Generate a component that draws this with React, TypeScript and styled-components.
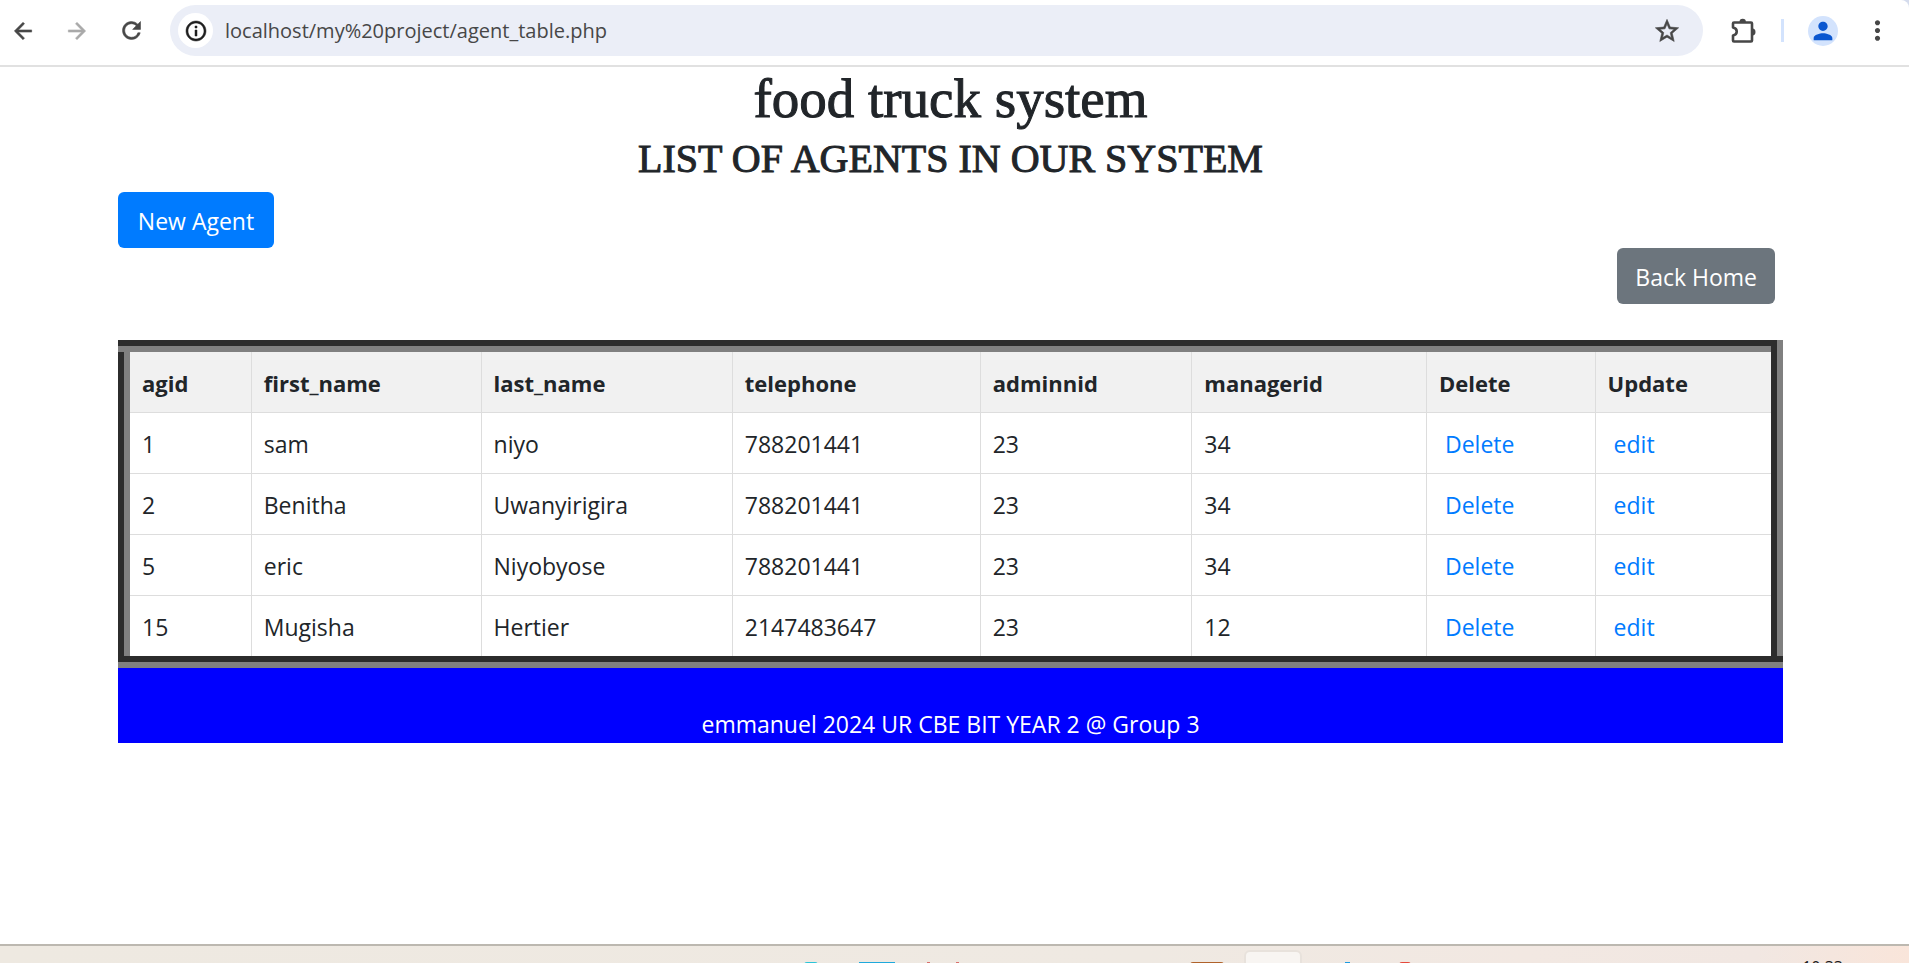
import React from "react";
import styled, { createGlobalStyle } from "styled-components";
import {
  MdArrowBack,
  MdArrowForward,
  MdRefresh,
  MdInfoOutline,
  MdStarBorder,
  MdPerson,
  MdMoreVert,
} from "react-icons/md";

const sans = `"Segoe UI", "Open Sans", "Noto Sans", sans-serif`;

const GlobalStyle = createGlobalStyle`
  *, *::before, *::after { box-sizing: border-box; }
  body {
    margin: 0;
    background: #fff;
    color: #212529;
    font-family: ${sans};
    font-size: 23px;
    line-height: 36px;
  }
`;

const Screen = styled.div`
  display: flex;
  flex-direction: column;
  height: 100vh;
  overflow: hidden;
`;

const ToolbarFrame = styled.div`
  background: #d5dced;
  flex: none;
`;

const Toolbar = styled.header`
  display: flex;
  align-items: center;
  padding: 5px 17px 9px 8px;
  background: #fff;
  border-bottom: 2px solid #e1e1e1;
  border-top-right-radius: 8px;
`;

const IconButton = styled.button<{ $color?: string; $bold?: boolean }>`
  display: flex;
  align-items: center;
  justify-content: center;
  width: 30px;
  height: 36px;
  padding: 0;
  border: 0;
  background: transparent;
  color: ${(p) => p.$color ?? "#474747"};

  svg {
    flex: none;
  }

  path:not([fill="none"]) {
    ${(p) => p.$bold && "stroke: currentColor; stroke-width: 0.5;"}
  }
`;

const NavGroup = styled.nav`
  display: flex;
  gap: 24px;
  margin-right: 24px;
`;

const AddressBar = styled.div`
  display: flex;
  flex: 1;
  align-items: center;
  height: 51px;
  padding: 0 21px 0 8px;
  border-radius: 26px;
  background: #ebeef7;
`;

const InfoButton = styled(IconButton)`
  width: 35px;
  height: 35px;
  border-radius: 50%;
  background: #fff;
`;

const AddressInput = styled.input`
  flex: 1;
  height: 36px;
  margin: 0 12px;
  padding: 0 0 1px;
  border: 0;
  outline: 0;
  background: transparent;
  color: #474747;
  font: 20px/34px ${sans};
`;

const ToolGroup = styled.div`
  display: flex;
  align-items: center;
  margin-left: 25px;
`;

const Divider = styled.span`
  width: 3px;
  height: 23px;
  margin: 0 24px 0 23px;
  background: #d3e3fd;
`;

const Avatar = styled(IconButton)`
  width: 30px;
  height: 30px;
  margin-right: 24px;
  border-radius: 50%;
  background: #d3e3fd;
`;

const Page = styled.main`
  flex: 1;
  min-height: 0;
  padding: 0 126px 0 118px;
`;

const Title = styled.h1`
  margin: 0;
  font: 500 55px/64px "Century", "Liberation Serif", serif;
  text-align: center;
  -webkit-text-stroke: 1px currentColor;
`;

const Subtitle = styled.h2`
  margin: 0 0 5px;
  font: 500 40px/56px "Century", "Liberation Serif", serif;
  text-align: center;
  -webkit-text-stroke: 1px currentColor;
`;

const Actions = styled.div<{ $end?: boolean }>`
  display: flex;
  justify-content: ${(p) => (p.$end ? "flex-end" : "flex-start")};
  padding-right: 8px;
`;

const ActionLink = styled.a<{ $bg: string }>`
  min-width: 156px;
  padding: 11px 18px 9px;
  border-radius: 6px;
  background: ${(p) => p.$bg};
  color: #fff;
  text-align: center;
  text-decoration: none;
`;

const AgentTable = styled.table`
  width: 100%;
  margin-top: 36px;
  border: 12px groove gray;
  border-collapse: collapse;
  table-layout: fixed;
`;

const Col = styled.col<{ $w: string }>`
  width: ${(p) => p.$w};
`;

const Th = styled.th`
  padding: 13px 12px 11px;
  border: 1px solid #dddddd;
  background: #f1f1f1;
  text-align: left;
  font-size: 22px;
  font-weight: 700;
`;

const Td = styled.td`
  padding: 13px 12px 11px;
  border: 1px solid #dddddd;
`;

const RowLink = styled.a`
  padding: 0 6px;
  color: #007bff;
  text-decoration: none;
`;

const Footer = styled.footer`
  padding: 38px 0 1px;
  background: #0000ff;
  color: #fff;
  text-align: center;
`;

const Taskbar = styled.div`
  display: flex;
  flex: none;
  align-items: flex-start;
  height: 19px;
  padding: 0 66px 0 804px;
  overflow: hidden;
  border-top: 2px solid #bcb8b0;
  background: linear-gradient(90deg, #eee9e1 0%, #efe9e2 60%, #f2e8e2 80%, #f1e7e2 92%, #f9e5da 100%);
`;

const TaskIcon = styled.span<{ $w: number; $color: string; $gap: number; $round?: boolean }>`
  flex: none;
  width: ${(p) => p.$w}px;
  height: 30px;
  margin: 16px ${(p) => p.$gap}px 0 0;
  border-radius: ${(p) => (p.$round ? "3px" : "0")};
  background: ${(p) => p.$color};
`;

const ActiveTask = styled.span`
  flex: none;
  width: 58px;
  height: 50px;
  margin: 4px 43px 0 0;
  border: 2px solid #e8e2dc;
  border-radius: 6px;
  background: #f8f5f2;
`;

const Clock = styled.time`
  margin: 11px 0 0 auto;
  color: #1b1b1b;
  font-size: 16px;
  line-height: 20px;
`;

const columns = [
  { name: "agid", width: "7.7%" },
  { name: "first_name", width: "13.9%" },
  { name: "last_name", width: "15.2%" },
  { name: "telephone", width: "15%" },
  { name: "adminnid", width: "12.8%" },
  { name: "managerid", width: "14.2%" },
  { name: "Delete", width: "10.2%" },
  { name: "Update", width: "11%" },
];

const agents = [
  ["1", "sam", "niyo", "788201441", "23", "34"],
  ["2", "Benitha", "Uwanyirigira", "788201441", "23", "34"],
  ["5", "eric", "Niyobyose", "788201441", "23", "34"],
  ["15", "Mugisha", "Hertier", "2147483647", "23", "12"],
];

function ExtensionIcon() {
  return (
    <svg width="26" height="26" viewBox="0 0 26 26" fill="none" aria-hidden="true">
      <path
        d="M4 4.500h17q1 0 1 1v17q0 1-1 1H4q-1 0-1-1v-5c5-1 5-7 0-8v-4q0-1 1-1z"
        stroke="currentColor"
        strokeWidth="2.600"
        strokeLinejoin="round"
      />
      <path d="M9.500 4a3.200 3.200 0 0 1 6.400 0zM22.500 10.500a3 3.500 0 0 1 0 7z" fill="currentColor" />
    </svg>
  );
}

export default function App() {
  return (
    <Screen>
      <GlobalStyle />
      <ToolbarFrame>
        <Toolbar>
          <NavGroup aria-label="History">
            <IconButton $bold aria-label="Back"><MdArrowBack size={26} /></IconButton>
            <IconButton $bold aria-label="Forward" $color="#a9a9a9"><MdArrowForward size={26} /></IconButton>
            <IconButton $bold aria-label="Reload"><MdRefresh size={27} /></IconButton>
          </NavGroup>
          <AddressBar>
            <InfoButton $bold aria-label="Site information" $color="#1f1f1f"><MdInfoOutline size={24} /></InfoButton>
            <AddressInput aria-label="Address" defaultValue="localhost/my%20project/agent_table.php" />
            <IconButton $bold aria-label="Bookmark"><MdStarBorder size={28} /></IconButton>
          </AddressBar>
          <ToolGroup>
            <IconButton aria-label="Extensions"><ExtensionIcon /></IconButton>
            <Divider />
            <Avatar aria-label="Profile" $color="#0b57d0"><MdPerson size={28} /></Avatar>
            <IconButton aria-label="Menu"><MdMoreVert size={31} /></IconButton>
          </ToolGroup>
        </Toolbar>
      </ToolbarFrame>
      <Page>
        <Title>food truck system</Title>
        <Subtitle>LIST OF AGENTS IN OUR SYSTEM</Subtitle>
        <Actions>
          <ActionLink href="#new" $bg="#007bff">New Agent</ActionLink>
        </Actions>
        <Actions $end>
          <ActionLink href="#home" $bg="#6c757d">Back Home</ActionLink>
        </Actions>
        <AgentTable>
          <colgroup>
            {columns.map((c) => <Col key={c.name} $w={c.width} />)}
          </colgroup>
          <thead>
            <tr>{columns.map((c) => <Th key={c.name} scope="col">{c.name}</Th>)}</tr>
          </thead>
          <tbody>
            {agents.map((row) => (
              <tr key={row[0]}>
                {row.map((value, i) => <Td key={i}>{value}</Td>)}
                <Td><RowLink href={`#delete-${row[0]}`}>Delete</RowLink></Td>
                <Td><RowLink href={`#edit-${row[0]}`}>edit</RowLink></Td>
              </tr>
            ))}
          </tbody>
        </AgentTable>
        <Footer>emmanuel 2024 UR CBE BIT YEAR 2 @ Group 3</Footer>
      </Page>
      <Taskbar>
        <TaskIcon $w={14} $gap={41} $color="#2bc4d8" $round />
        <TaskIcon $w={36} $gap={32} $color="#1fa9dc" />
        <TaskIcon $w={3} $gap={26} $color="#d9706c" />
        <TaskIcon $w={3} $gap={231} $color="#d9706c" />
        <TaskIcon $w={34} $gap={20} $color="#b0622a" $round />
        <ActiveTask />
        <TaskIcon $w={5} $gap={49} $color="#1d9be0" />
        <TaskIcon $w={12} $gap={0} $color="#e5483b" $round />
        <Clock>10:33</Clock>
      </Taskbar>
    </Screen>
  );
}
